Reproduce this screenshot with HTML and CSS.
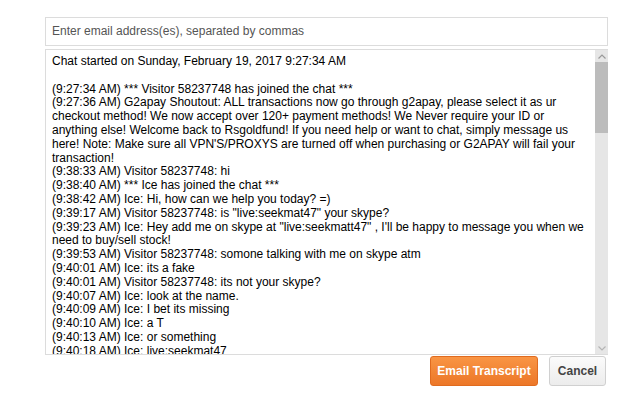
FILE: index.html
```html
<!DOCTYPE html>
<html>
<head>
<meta charset="utf-8">
<link rel="stylesheet" href="styles.css">
</head>
<body>
<div class="dialog">
  <div class="email-input">Enter email address(es), separated by commas</div>
  <div class="chat-box">
    <div class="chat-text">
      <div class="line">Chat started on Sunday, February 19, 2017 9:27:34 AM</div>
      <div class="line blank">&nbsp;</div>
      <div class="line">(9:27:34 AM) *** Visitor 58237748 has joined the chat ***</div>
      <div class="line">(9:27:36 AM) G2apay Shoutout: ALL transactions now go through g2apay, please select it as ur checkout method! We now accept over 120+ payment methods! We Never require your ID or anything else! Welcome back to Rsgoldfund! If you need help or want to chat, simply message us here! Note: Make sure all VPN'S/PROXYS are turned off when purchasing or G2APAY will fail your transaction!</div>
      <div class="line">(9:38:33 AM) Visitor 58237748: hi</div>
      <div class="line">(9:38:40 AM) *** Ice has joined the chat ***</div>
      <div class="line">(9:38:42 AM) Ice: Hi, how can we help you today? =)</div>
      <div class="line">(9:39:17 AM) Visitor 58237748: is "live:seekmat47" your skype?</div>
      <div class="line">(9:39:23 AM) Ice: Hey add me on skype at "live:seekmatt47" , I'll be happy to message you when we need to buy/sell stock!</div>
      <div class="line">(9:39:53 AM) Visitor 58237748: somone talking with me on skype atm</div>
      <div class="line">(9:40:01 AM) Ice: its a fake</div>
      <div class="line">(9:40:01 AM) Visitor 58237748: its not your skype?</div>
      <div class="line">(9:40:07 AM) Ice: look at the name.</div>
      <div class="line">(9:40:09 AM) Ice: I bet its missing</div>
      <div class="line">(9:40:10 AM) Ice: a T</div>
      <div class="line">(9:40:13 AM) Ice: or something</div>
      <div class="line">(9:40:18 AM) Ice: live:seekmat47</div>
    </div>
    <div class="scrollbar">
      <div class="sb-arrow">
        <svg width="8" height="5" viewBox="0 0 8 5"><path d="M0.5 4.5 L4 1 L7.5 4.5" fill="none" stroke="#9a9a9a" stroke-width="1.2"/></svg>
      </div>
      <div class="sb-thumb"></div>
      <div class="sb-track"></div>
      <div class="sb-arrow">
        <svg width="8" height="5" viewBox="0 0 8 5"><path d="M0.5 0.5 L4 4 L7.5 0.5" fill="none" stroke="#b4b4b4" stroke-width="1.2"/></svg>
      </div>
    </div>
  </div>
  <div class="actions">
    <button class="btn btn-primary">Email Transcript</button>
    <button class="btn btn-default">Cancel</button>
  </div>
</div>
</body>
</html>
```

FILE: styles.css
```css
html, body {
  margin: 0;
  padding: 0;
  background: #ffffff;
}

body {
  font-family: "Liberation Sans", Arial, sans-serif;
  font-size: 12px;
}

.dialog {
  width: 563px;
  padding: 17px 0 0 45px;
  display: flex;
  flex-direction: column;
}

.email-input {
  box-sizing: border-box;
  height: 29px;
  border: 1px solid #dcdcdc;
  padding: 0 6px;
  color: #555555;
  line-height: 27px;
  font-size: 12px;
}

.chat-box {
  box-sizing: border-box;
  margin-top: 3px;
  height: 306px;
  border: 1px solid #dcdcdc;
  border-right: none;
  display: flex;
  overflow: hidden;
}

.chat-text {
  flex: 1;
  padding: 5px 9px 0 6px;
  color: #000000;
  line-height: 13.8px;
  overflow: hidden;
}

.scrollbar {
  width: 13px;
  flex: none;
  background: #e6e6e6;
  display: flex;
  flex-direction: column;
}

.sb-arrow {
  height: 12px;
  display: flex;
  align-items: center;
  justify-content: center;
  flex: none;
}

.sb-thumb {
  height: 71px;
  background: #bcbcbc;
  flex: none;
}

.sb-track {
  flex: 1;
}

.actions {
  display: flex;
  justify-content: flex-end;
  gap: 11px;
  margin-top: 1px;
  padding-right: 2px;
}

.btn {
  box-sizing: border-box;
  height: 30px;
  font-family: "Liberation Sans", Arial, sans-serif;
  font-size: 12px;
  font-weight: bold;
  border-radius: 3px;
  padding: 0;
  white-space: nowrap;
  cursor: pointer;
}

.btn-primary {
  width: 108px;
  color: #ffffff;
  background: linear-gradient(#f99544, #ec7728);
  border: 1px solid #e06b1f;
}

.btn-default {
  width: 57px;
  color: #444444;
  background: linear-gradient(#fbfbfb, #ececec);
  border: 1px solid #d0d0d0;
}
```
